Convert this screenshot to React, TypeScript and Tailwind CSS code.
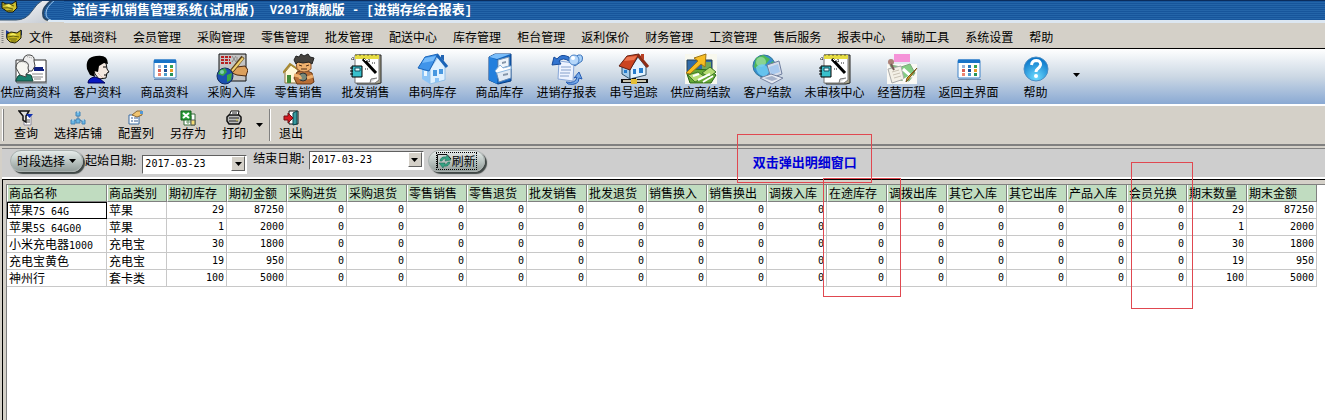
import { useState, type ReactNode } from "react";
import { clsx } from "clsx";

const MENUS = [
  "文件", "基础资料", "会员管理", "采购管理", "零售管理", "批发管理", "配送中心", "库存管理", "柜台管理",
  "返利保价", "财务管理", "工资管理", "售后服务", "报表中心", "辅助工具", "系统设置", "帮助",
];

const COLUMNS = [
  "商品名称", "商品类别", "期初库存", "期初金额", "采购进货", "采购退货", "零售销售", "零售退货", "批发销售", "批发退货",
  "销售换入", "销售换出", "调拨入库", "在途库存", "调拨出库", "其它入库", "其它出库", "产品入库", "会员兑换", "期末数量", "期末金额",
];

type Row = { name: string; category: string; qty: number; amount: number };

const ROWS: Row[] = [
  { name: "苹果7S 64G", category: "苹果", qty: 29, amount: 87250 },
  { name: "苹果5S 64G00", category: "苹果", qty: 1, amount: 2000 },
  { name: "小米充电器1000", category: "充电宝", qty: 30, amount: 1800 },
  { name: "充电宝黄色", category: "充电宝", qty: 19, amount: 950 },
  { name: "神州行", category: "套卡类", qty: 100, amount: 5000 },
];

const MONO = "font-['DejaVu_Sans_Mono',monospace]";

const TOOLS: { label: string; icon: ReactNode }[] = [
  { label: "供应商资料", icon: <SupplierIcon /> },
  { label: "客户资料", icon: <CustomerIcon /> },
  { label: "商品资料", icon: <CalendarIcon /> },
  { label: "采购入库", icon: <PurchaseIcon /> },
  { label: "零售销售", icon: <RetailIcon /> },
  { label: "批发销售", icon: <NotepadIcon /> },
  { label: "串码库存", icon: <HouseIcon /> },
  { label: "商品库存", icon: <CabinetIcon /> },
  { label: "进销存报表", icon: <ReportIcon /> },
  { label: "串号追踪", icon: <TraceIcon /> },
  { label: "供应商结款", icon: <MoneyIcon /> },
  { label: "客户结款", icon: <NetworkIcon /> },
  { label: "未审核中心", icon: <NotepadIcon /> },
  { label: "经营历程", icon: <HistoryIcon /> },
  { label: "返回主界面", icon: <CalendarIcon /> },
  { label: "帮助", icon: <HelpIcon /> },
];

const ACTIONS: { label: string; icon: ReactNode }[] = [
  { label: "查询", icon: <FilterIcon /> },
  { label: "选择店铺", icon: <ShopsIcon /> },
  { label: "配置列", icon: <ConfigIcon /> },
  { label: "另存为", icon: <ExcelIcon /> },
  { label: "打印", icon: <PrinterIcon /> },
];

export default function App() {
  const [from, setFrom] = useState("2017-03-23");
  const [to, setTo] = useState("2017-03-23");

  return (
    <div className="relative flex min-h-screen flex-col overflow-hidden bg-[#d4d0c8] font-['Noto_Sans_CJK_SC','Liberation_Sans',sans-serif] text-xs leading-4 text-black">
      <TitleBar />

      <nav className="flex h-[25px] items-center gap-4 whitespace-nowrap pt-0.5 pl-px">
        <div className="-mr-2.5 flex items-center gap-px">
          <Grip />
          <HandshakeIcon />
        </div>
        {MENUS.map((m) => (
          <button key={m}>{m}</button>
        ))}
      </nav>

      {/* Main toolbar */}
      <div className="flex h-[58px] items-start border-t border-b-2 border-t-black border-b-white bg-linear-to-b from-white via-[#ccd8e4] to-[#8aa9d3] pt-1">
        <div className="-ml-[3px] flex whitespace-nowrap">
          {TOOLS.map((t) => (
            <button key={t.label} className="flex w-[67px] flex-col items-center">
              <span className="-mb-px h-8">{t.icon}</span>
              <span>{t.label}</span>
            </button>
          ))}
        </div>
        <button aria-label="更多" className="mt-5 ml-1">
          <Caret />
        </button>
      </div>

      {/* Report toolbar */}
      <div className="flex h-10 items-center whitespace-nowrap border-b-2 border-[#808080] pl-0.5">
        <div className="h-8 w-0.5 border-r border-[#808080] bg-white" />
        <div className="ml-2.5 flex gap-4">
          {ACTIONS.map((a) => (
            <button key={a.label} className="flex flex-col items-center">
              {a.icon}
              <span className="-mt-px">{a.label}</span>
            </button>
          ))}
        </div>
        <button aria-label="打印选项" className="ml-2.5">
          <Caret />
        </button>
        <div className="mr-2 ml-1.5 h-8 w-0.5 border-r border-white bg-[#808080]" />
        <button className="flex flex-col items-center">
          <ExitIcon />
          <span className="-mt-px">退出</span>
        </button>
      </div>

      {/* Date filter */}
      <div className="mt-0.5 ml-0.5 flex h-[31px] items-start whitespace-nowrap border-t border-b-2 border-t-[#808080] border-b-white bg-[#cecece] pt-px pl-2">
        <PillButton>
          时段选择
          <Caret />
        </PillButton>
        <label htmlFor="from" className="ml-0.5 pt-0.5">起始日期:</label>
        <div className="ml-1.5 pt-1">
          <DateSelect id="from" value={from} onChange={setFrom} className="w-[105px]" />
        </div>
        <label htmlFor="to" className="ml-1.5">结束日期:</label>
        <div className="ml-1">
          <DateSelect id="to" value={to} onChange={setTo} className="w-[115px]" />
        </div>
        <div className="ml-1">
          <PillButton>
            <span className="mx-px flex items-center border border-dotted border-black">
              <RefreshIcon />
              刷新
            </span>
          </PillButton>
        </div>
        <p className="ml-[268px] pt-1 text-[13px] font-bold text-[#0000d8]">双击弹出明细窗口</p>
      </div>

      <div className="ml-0.5 flex grow flex-col border-t border-l border-black">
        <div className="flex grow flex-col border-t-4 border-l-3 border-[#d4d0c8]">
          <div className="grow border-t border-l border-[#808080] bg-white pr-2">
            <ReportTable />
          </div>
        </div>
      </div>

      <div className="pointer-events-none absolute top-[134px] left-[737px] h-[49px] w-[135px] border border-[#e04850]" />
      <div className="pointer-events-none absolute top-[178px] left-[823px] h-[119px] w-[78px] border border-[#e04850]" />
      <div className="pointer-events-none absolute top-[162px] left-[1131px] h-[147px] w-[62px] border border-[#e04850]" />
    </div>
  );
}

function TitleBar() {
  return (
    <header className="flex h-[23px] bg-[#d4d0c8]">
      <svg width="64" height="23" viewBox="0 0 64 23" className="shrink-0">
        <defs>
          <pattern id="stripes" width="4" height="2" patternUnits="userSpaceOnUse">
            <rect width="4" height="1" fill="#17559b" />
            <rect y="1" width="4" height="1" fill="#2465a9" />
          </pattern>
          <linearGradient id="silver" x1="0" x2="1" y1="0" y2="1">
            <stop offset="0" stopColor="#fff" />
            <stop offset="1" stopColor="#c4cad2" />
          </linearGradient>
        </defs>
        <path d="M0 0H53Q44 6 43 15Q43 21 48 23H0Z" fill="url(#silver)" />
        <path d="M0 0H43Q37 3 32 11Q26 20 16 20H0Z" fill="url(#stripes)" />
        <path d="M0 20H16Q26 20 32 11Q37 3 43 0" fill="none" stroke="#31506f" />
        <path d="M52 0Q43 7 43 13Q43 20 49 20H64V0Z" fill="url(#stripes)" />
        <path d="M52 0Q43 7 43 13Q43 20 49 20" fill="none" stroke="#284766" strokeWidth="2" />
        <path d="M55 0Q46 7 46 13Q46 19 51 20" fill="none" stroke="#9dc5e8" />
        <path d="M48 21H64" stroke="#dce9f5" strokeWidth="2" />
        <path d="M0 .5H64" stroke="#123563" />
        <path d="M2 2L6 4L12 4L16 1L17 8L13 12L8 12L2 8Z" fill="#cfc02e" stroke="#161605" />
        <path d="M3 5Q8 3 14 6M3 8Q8 7 13 9M6 11L13 10" stroke="#65620c" fill="none" />
        <path d="M5 5L9 4L12 6L9 7Z" fill="#f4ef72" />
      </svg>
      <div className="flex grow items-start border-t border-b-3 border-t-[#0b2c5c] border-b-[#dce7f2] bg-[repeating-linear-gradient(#17559b_0_1px,#2465a9_1px_2px)]">
        <h1 className="ml-2 text-[13px] leading-4 font-bold whitespace-pre text-white">
          诺信手机销售管理系统<Latin>(</Latin>试用版<Latin>{")  V2017"}</Latin>旗舰版<Latin>{" - ["}</Latin>进销存综合报表<Latin>]</Latin>
        </h1>
      </div>
    </header>
  );
}

function Latin({ children }: { children: ReactNode }) {
  return <span className="font-['Liberation_Mono',monospace] text-xs leading-none">{children}</span>;
}

function ReportTable() {
  return (
    <table className="w-full table-fixed border-separate border-spacing-0 whitespace-nowrap">
      <thead>
        <tr className="bg-[#c0dcc0] leading-4">
          {COLUMNS.map((c, i) => (
            <th
              key={c}
              className={clsx(
                "overflow-hidden border-r border-b border-l border-r-[#808080] border-b-[#808080] border-l-white p-0 pl-px text-left font-normal",
                i === 0 ? "w-[100px]" : i === COLUMNS.length - 1 && "w-[70px]",
              )}
            >
              {c}
            </th>
          ))}
        </tr>
      </thead>
      <tbody>
        {ROWS.map((r, i) => (
          <tr key={r.name} className="leading-4">
            <td className={clsx("border-r border-b border-[#c8c8c8] p-0 pl-0.5", i === 0 && "outline -outline-offset-1 outline-black")}>
              <MixedText text={r.name} />
            </td>
            <td className="border-r border-b border-[#c8c8c8] p-0 pl-0.5">{r.category}</td>
            <NumberCell value={r.qty} />
            <NumberCell value={r.amount} />
            {COLUMNS.slice(4, -2).map((c) => (
              <NumberCell key={c} value={0} />
            ))}
            <NumberCell value={r.qty} />
            <NumberCell value={r.amount} />
          </tr>
        ))}
      </tbody>
    </table>
  );
}

function NumberCell({ value }: { value: number }) {
  return <td className={clsx("border-r border-b border-[#c8c8c8] p-0 pr-0.5 text-right text-[10px]", MONO)}>{value}</td>;
}

// Latin runs take half the width of a Chinese character
function MixedText({ text }: { text: string }) {
  return text.split(/([\x20-\x7e]+)/).map((part, i) =>
    i % 2 ? <span key={i} className={clsx("text-[10px] leading-none", MONO)}>{part}</span> : part,
  );
}

function PillButton({ children }: { children: ReactNode }) {
  return (
    <button className="flex h-[22px] items-center gap-1 rounded-full border border-[#a8b0ae] bg-linear-to-b from-[#e6ecea] via-[#bcc6c3] to-[#929d9a] px-1.5 shadow-[2px_2px_1px_#404846]">
      {children}
    </button>
  );
}

function DateSelect({ id, value, onChange, className }: { id: string; value: string; onChange: (v: string) => void; className: string }) {
  return (
    <div className={clsx("relative", className)}>
      <select
        id={id}
        value={value}
        onChange={(e) => onChange(e.target.value)}
        className={clsx("h-[19px] w-full appearance-none border border-t-[#606060] border-r-white border-b-white border-l-[#606060] bg-white pl-0.5 text-[10px]", MONO)}
      >
        <option>2017-03-23</option>
        <option>2017-03-22</option>
      </select>
      <span className="pointer-events-none absolute top-0.5 right-0.5 flex h-[15px] w-[14px] items-center justify-center border border-t-white border-r-[#606060] border-b-[#606060] border-l-white bg-[#d4d0c8]">
        <Caret />
      </span>
    </div>
  );
}

function Caret() {
  return (
    <svg width="7" height="4" viewBox="0 0 7 4">
      <path d="M0 0H7L3.5 4Z" />
    </svg>
  );
}

function Grip() {
  return (
    <svg width="3" height="14" viewBox="0 0 3 14">
      <path d="M1.5 0V14" stroke="#808080" strokeWidth="2" strokeDasharray="1 1" />
    </svg>
  );
}

function HandshakeIcon() {
  return (
    <svg width="18" height="16" viewBox="0 0 18 16">
      <path d="M1 1L4 3V7L1 9ZM17 1L13 3V8L17 6Z" fill="#183898" />
      <path d="M2 5L6 3L12 4L16 1L16 9L13 12L10 14L5 13L2 10Z" fill="#c8b620" stroke="#222006" />
      <path d="M4 6L8 4L12 6L9 7Z" fill="#f4ef60" />
      <path d="M3 8Q8 6 14 8M4 10L12 10M6 12L11 12" stroke="#65620c" fill="none" />
    </svg>
  );
}

function SupplierIcon() {
  return (
    <svg width="33" height="32" viewBox="0 0 33 32">
      <path d="M2 7H32V29H2Z" fill="#fff" stroke="#333" />
      <path d="M3 30H33V8" fill="none" stroke="#777" />
      <path d="M17 15H29M20 17H30" stroke="#102080" strokeWidth="2" />
      <path d="M18 21H29M16 24H29M20 26H27" stroke="#888" />
      <path d="M9 8Q10 1 16 2Q21 3 20 8L21 13L18 18H12Z" fill="#eee" stroke="#444" />
      <path d="M2 27Q3 22 8 21L17 22L19 28H2Z" fill="#18806c" stroke="#16483e" />
      <path d="M2 15Q2 8 9 8Q16 9 14 15L15 19L12 21V24L6 22Z" fill="#f5f5f0" stroke="#444" />
      <path d="M4 10Q8 7 13 11M11 3L18 5" stroke="#999" fill="none" strokeDasharray="1 1" />
    </svg>
  );
}

function CustomerIcon() {
  return (
    <svg width="32" height="32" viewBox="0 0 32 32">
      <path d="M11 14L19 8L24 10L25 16L27 19L25 20L24 25L17 26L13 21Z" fill="#f4e8e0" stroke="#111" />
      <path d="M5 16Q3 4 14 3Q26 1 26 11L22 10L17 13L16 19L12 18L13 24L8 22Z" fill="#000" />
      <path d="M6 30Q6 25 13 24L18 26L23 30Z" fill="#0818c0" stroke="#000060" />
      <path d="M21 14H24M22 22H25" stroke="#000" />
      <path d="M16 20L21 25" stroke="#d8a890" strokeDasharray="1 1" />
    </svg>
  );
}

function CalendarIcon() {
  const colors = ["#9ab3d8", "#2c7cc0", "#37a352", "#d95e55", "#1e4c95", "#e99a26", "#ee8570", "#4e9dcc", "#27955a"];
  return (
    <svg width="32" height="32" viewBox="0 0 32 32">
      <rect x="5" y="7" width="22" height="18" rx="1" fill="#fff" stroke="#3c82c8" />
      <path d="M5 6.5H27V10H5Z" fill="#1873c8" />
      <path d="M5 26.5H28" stroke="#718bad" />
      {colors.map((c, i) => (
        <rect key={i} x={9 + (i % 3) * 6} y={12 + Math.floor(i / 3) * 4} width="3" height="3" fill={c} />
      ))}
    </svg>
  );
}

function PurchaseIcon() {
  return (
    <svg width="32" height="32" viewBox="0 0 32 32">
      <path d="M3 1H30V28H3Z" fill="#c4c4c4" stroke="#111" />
      <path d="M5 4H15M5 7H14M5 10H15" stroke="#b82020" strokeWidth="2" strokeDasharray="3 1" />
      <path d="M16 3L20 9M20 3L16 9M21 4V9" stroke="#888" />
      <path d="M16 20L21 14L29 13L32 17L30 23L21 22Z" fill="#dca05c" stroke="#4b2810" />
      <path d="M15 19L27 4" stroke="#594018" strokeWidth="4" />
      <path d="M16 18L27 5" stroke="#f0d070" strokeWidth="2" />
      <circle cx="9" cy="23" r="8" fill="#1c50b0" stroke="#122c60" />
      <path d="M4 17L9 15L11 19L7 23L2 21ZM11 22L16 20L15 27L11 29Z" fill="#39a644" />
      <circle cx="6" cy="19" r="2" fill="#a0dbe8" opacity=".7" />
    </svg>
  );
}

function RetailIcon() {
  return (
    <svg width="32" height="32" viewBox="0 0 32 32">
      <path d="M2 19V30H15V17L8 12Z" fill="#fff8d8" stroke="#8c713a" />
      <path d="M0 20L7 11L16 17" fill="none" stroke="#a88930" strokeWidth="2" />
      <path d="M4 22H8V30H4Z" fill="#438b36" />
      <path d="M14 19Q22 16 29 20L31 29L28 31H14L11 25Z" fill="#b96f36" stroke="#673713" />
      <path d="M13 9H28V16Q21 22 14 16Z" fill="#eeb06d" stroke="#8d552e" />
      <path d="M11 7L13 3L16 4L18 1L21 3L25 1L27 4L31 5L29 11L26 9L20 10L15 9L13 11Z" fill="#45423e" stroke="#222" />
      <path d="M16 12L19 13M23 13L26 12M18 16H24" stroke="#512f16" />
      <circle cx="20" cy="24" r="4" fill="#778878" stroke="#333" />
      <path d="M11 22L16 23L18 26M30 23L24 25" stroke="#eeb06d" strokeWidth="3" fill="none" />
    </svg>
  );
}

function NotepadIcon() {
  return (
    <svg width="32" height="32" viewBox="0 0 32 32">
      <path d="M7 2H31V30L27 31H7Z" fill="#aaa58c" stroke="#222" />
      <path d="M5 2H29V27L25 30H5Z" fill="#fff" stroke="#777" />
      <path d="M5 2H29V6H5Z" fill="#e6dc42" />
      <path d="M6 1V3M10 1V3M14 1V3M18 1V3M22 1V3M26 1V3" stroke="#68621c" />
      <path d="M13 6L26 20" stroke="#000" strokeWidth="3" />
      <path d="M14 6L16 8" stroke="#fff" />
      <path d="M1 6H5M3 4V8M17 8H21M19 6V10M15 16H18M22 10H25" stroke="#222" strokeDasharray="1 1" />
      <path d="M2 13H12V24H2Z" fill="#38c0cc" stroke="#000" />
      <path d="M5 15H10V18H5Z" fill="#e5ffff" stroke="#164e60" />
      <path d="M0 15H3M0 18H3M0 21H3" stroke="#000" />
      <path d="M20 30L21 26L27 25" fill="#ddd" stroke="#777" />
    </svg>
  );
}

function HouseIcon() {
  return (
    <svg width="32" height="32" viewBox="0 0 32 32">
      <path d="M5 14L13 16V31L5 26Z" fill="#8cc4f6" />
      <path d="M13 16L21 4L28 14V27L13 31Z" fill="#dff1ff" stroke="#91bfe8" />
      <path d="M1 15L8 4L21 1L12 18Z" fill="#3f94ea" stroke="#1a64b8" />
      <path d="M8 5L19 3L16 8L5 10Z" fill="#74bafa" />
      <path d="M20 2L30 14" stroke="#1a64b8" strokeWidth="3" />
      <path d="M24 2H27V8L24 5Z" fill="#2264b2" />
      <path d="M7 18H10V23H7Z" fill="#e9f6ff" />
      <path d="M16 17H20V23H16ZM22 16H26V21H22Z" fill="#4898e0" />
      <path d="M18 25H22V29H18Z" fill="#8cc4f6" />
    </svg>
  );
}

function CabinetIcon() {
  return (
    <svg width="32" height="32" viewBox="0 0 32 32">
      <path d="M5 4L11 1H27V28L14 31L5 27Z" fill="#1364bd" stroke="#083d83" />
      <path d="M5 4L13 7V31L5 27Z" fill="#2480dd" />
      <path d="M5 4L11 1H27L13 6Z" fill="#79bdfa" />
      <path d="M14 7L25 4V13L14 16Z" fill="#edf4fa" stroke="#7895b4" />
      <path d="M12 18L27 15V25L15 29Z" fill="#e0eaf4" stroke="#658bb6" />
      <path d="M11 18L16 12L19 15L27 13V16L13 20Z" fill="#fff" stroke="#8db8df" />
      <path d="M18 9L22 8V10L18 11ZM19 21L24 20V22L19 23Z" fill="#8697aa" />
    </svg>
  );
}

function ReportIcon() {
  return (
    <svg width="32" height="32" viewBox="0 0 32 32">
      <path d="M8 8L23 10L22 28L7 26Z" fill="#edf3ff" stroke="#88a7d8" />
      <path d="M10 14H20M10 17H20M9 20H19M9 23H18" stroke="#85a0cb" />
      <path d="M18 4Q10 0 6 6L3 4L1 12L10 11L8 8Q12 4 18 8Z" fill="#3274d0" stroke="#164a99" />
      <path d="M15 29Q25 31 26 24L23 25L28 19L31 26L28 25Q28 33 17 31Z" fill="#76a9e8" stroke="#255bb2" />
      <path d="M20 9L27 2Q33 1 31 8L24 13Z" fill="#a9d2fa" stroke="#3c73b9" />
      <circle cx="23" cy="7" r="5" fill="#b4d6fa" stroke="#4d83c6" />
      <circle cx="22" cy="5" r="2" fill="#fff" />
    </svg>
  );
}

function TraceIcon() {
  return (
    <svg width="32" height="32" viewBox="0 0 32 32">
      <path d="M4 13L12 16V26L4 21Z" fill="#a3cbea" stroke="#31536d" />
      <path d="M12 16L20 4L28 14V22L12 26Z" fill="#e2f3ff" stroke="#31536d" />
      <path d="M1 13L9 3L21 1L12 17Z" fill="#cb4420" stroke="#632012" />
      <path d="M9 4L19 3L16 7L6 8Z" fill="#ed7650" />
      <path d="M20 2L30 14" stroke="#8e2d16" strokeWidth="3" />
      <path d="M23 1H26V7L23 4Z" fill="#b84025" />
      <path d="M6 17H9V20H6ZM15 16H18V21H15ZM21 15H25V20H21Z" fill="#277dcc" />
      <path d="M3 28H30M16 25V31" stroke="#111" strokeWidth="4" />
      <path d="M5 28H28M16 26V31" stroke="#c8c4b0" strokeWidth="2" />
      <path d="M13 26H19V31H13Z" fill="#e4be36" />
    </svg>
  );
}

function MoneyIcon() {
  return (
    <svg width="32" height="32" viewBox="0 0 32 32">
      <path d="M0 1H32V31H0Z" fill="#f8f8ee" />
      <path d="M2 7H27V21H2Z" fill="#316ba8" stroke="#233c52" />
      <path d="M17 9H26V17H17Z" fill="#72a95a" />
      <path d="M2 21L8 16L25 17L31 22L26 30H5Z" fill="#66a936" stroke="#28651c" />
      <path d="M3 22L13 19L20 24L10 29ZM17 20L25 14L31 19L24 24Z" fill="#b6dc75" stroke="#3d7728" />
      <path d="M8 23L14 21M13 27L25 21M18 29L28 23" stroke="#fff" strokeWidth="2" />
      <path d="M1 20L13 8L9 5L21 1L20 14L16 11L5 21Z" fill="#f7bd23" stroke="#9e7414" />
    </svg>
  );
}

function NetworkIcon() {
  return (
    <svg width="32" height="32" viewBox="0 0 32 32">
      <circle cx="12" cy="13" r="11" fill="#368fce" stroke="#347698" />
      <path d="M4 5L11 2L18 6L14 11L9 12L7 18L2 14ZM16 12L21 8L23 13L18 17Z" fill="#4eb754" />
      <circle cx="9" cy="9" r="5" fill="#c4f2ce" opacity=".5" />
      <path d="M4 14Q12 7 18 18L13 24Q4 22 4 14Z" fill="#72cef5" opacity=".8" />
      <path d="M15 12L27 8L30 21L19 25Z" fill="#d6dce9" stroke="#6f7e9e" />
      <path d="M17 14L26 11L28 19L19 22Z" fill="#a9c9ee" />
      <path d="M8 25L19 21L31 25L20 31Z" fill="#e6eaf2" stroke="#7682a0" />
      <path d="M12 25L20 23L26 26L20 28Z" fill="#a5b2ca" />
    </svg>
  );
}

function HistoryIcon() {
  return (
    <svg width="32" height="32" viewBox="0 0 32 32">
      <path d="M1 11H31V31H1Z" fill="#faf9f4" />
      <path d="M8 1H24V9H8Z" fill="#f593d8" />
      <path d="M4 12L15 14L24 11L29 20L23 28L13 27L9 22Z" fill="#83cd83" stroke="#7da67c" />
      <path d="M2 16L15 13L18 26L6 30Z" fill="#f3f0e6" stroke="#aaa" />
      <path d="M17 16L25 23L17 28" fill="none" stroke="#fff" strokeWidth="3" />
      <circle cx="5" cy="9" r="3" fill="#ac8177" />
      <path d="M5 11L8 17" stroke="#755b54" strokeWidth="2" />
      <path d="M31 15L22 27L20 29L21 25Z" fill="#d89e29" stroke="#765619" />
      <path d="M6 19L13 17M7 22L14 20M8 25L15 23" stroke="#c9c2b4" />
    </svg>
  );
}

function HelpIcon() {
  return (
    <svg width="32" height="32" viewBox="0 0 32 32">
      <defs>
        <radialGradient id="helpBall" cx=".5" cy=".85" r=".8">
          <stop offset="0" stopColor="#6ddcff" />
          <stop offset="1" stopColor="#0773c8" />
        </radialGradient>
      </defs>
      <circle cx="16" cy="16" r="12" fill="url(#helpBall)" stroke="#4e8fc4" />
      <path d="M11.500 12Q12 7.500 16.500 7.500Q21 8 20.500 12Q20 14 17.500 16Q16 17 16 19" fill="none" stroke="#fff" strokeWidth="3" />
      <circle cx="16" cy="23" r="2" fill="#fff" />
    </svg>
  );
}

function FilterIcon() {
  return (
    <svg width="16" height="16" viewBox="0 0 16 16">
      <path d="M6 5H13V15H6Z" fill="#fff" stroke="#889" />
      <path d="M1 1H11L8 6V12L5 10V6Z" fill="#ddd" stroke="#111" strokeWidth="1.5" />
      <path d="M8 4H15L11.500 8Z" fill="#1030b0" />
      <path d="M8 10H12M8 12H12" stroke="#555" />
    </svg>
  );
}

function ShopsIcon() {
  return (
    <svg width="16" height="16" viewBox="0 0 16 16">
      <path d="M8 6V10M3 12L8 9L13 12" stroke="#55799b" fill="none" />
      <path d="M6 2H10V6H6ZM1 10H5V14H1ZM6 9H10V13H6ZM12 10H15V14H12Z" fill="#69b8e6" stroke="#4484b6" />
      <path d="M7 2H9M2 10H4M12 10H14" stroke="#dcf5ff" />
    </svg>
  );
}

function ConfigIcon() {
  return (
    <svg width="16" height="16" viewBox="0 0 16 16">
      <path d="M1 5H11V14H1Z" fill="#fff" stroke="#396aa3" />
      <path d="M3 8H5M6 8H10M3 11H5M6 11H10" stroke="#345b91" />
      <path d="M4 5L9 1H14V5L9 7Z" fill="#f1c46f" stroke="#8d6a35" />
      <path d="M12 1H15V4H12Z" fill="#5398d6" />
    </svg>
  );
}

function ExcelIcon() {
  return (
    <svg width="16" height="16" viewBox="0 0 16 16">
      <path d="M4 4H15V15H4Z" fill="#fff" stroke="#356b38" />
      <path d="M6 12H14M11 6V14M8 10V14" stroke="#69986a" />
      <path d="M1 1H11V10H1Z" fill="#2c9e39" stroke="#12601b" />
      <path d="M3 3L9 8M9 3L3 8" stroke="#fff" strokeWidth="2" />
      <path d="M11 10H15V15H11Z" fill="#f2dc74" stroke="#555" />
    </svg>
  );
}

function PrinterIcon() {
  return (
    <svg width="16" height="16" viewBox="0 0 16 16">
      <path d="M5 1H13L12 6H3Z" fill="#fff" stroke="#111" />
      <path d="M1 7L3 5H13L15 7V11L13 14H3L1 11Z" fill="#bbb" stroke="#111" strokeWidth="1.5" />
      <path d="M3 8H13M3 11H12M6 3H11" stroke="#222" />
      <path d="M10 10H12" stroke="#e5d62d" />
    </svg>
  );
}

function ExitIcon() {
  return (
    <svg width="16" height="16" viewBox="0 0 16 16">
      <path d="M6 1H15V14H6Z" fill="#fff" stroke="#111" />
      <path d="M10 3L14 1V14L10 15Z" fill="#38999e" stroke="#064349" />
      <path d="M1 6H5V3L10 8L5 13V10H1Z" fill="#d61920" stroke="#711014" />
    </svg>
  );
}

function RefreshIcon() {
  return (
    <svg width="15" height="15" viewBox="0 0 15 15">
      <path d="M.5 14V.5H10L14 5" fill="none" stroke="#111" />
      <path d="M3 7Q4 2 9 3L10 1L14 6L8 7L9 5Q6 4 5 7ZM13 8Q12 13 7 12L6 14L2 9H8L7 10Q10 11 11 8Z" fill="#35a383" stroke="#16634e" strokeWidth=".5" />
    </svg>
  );
}
